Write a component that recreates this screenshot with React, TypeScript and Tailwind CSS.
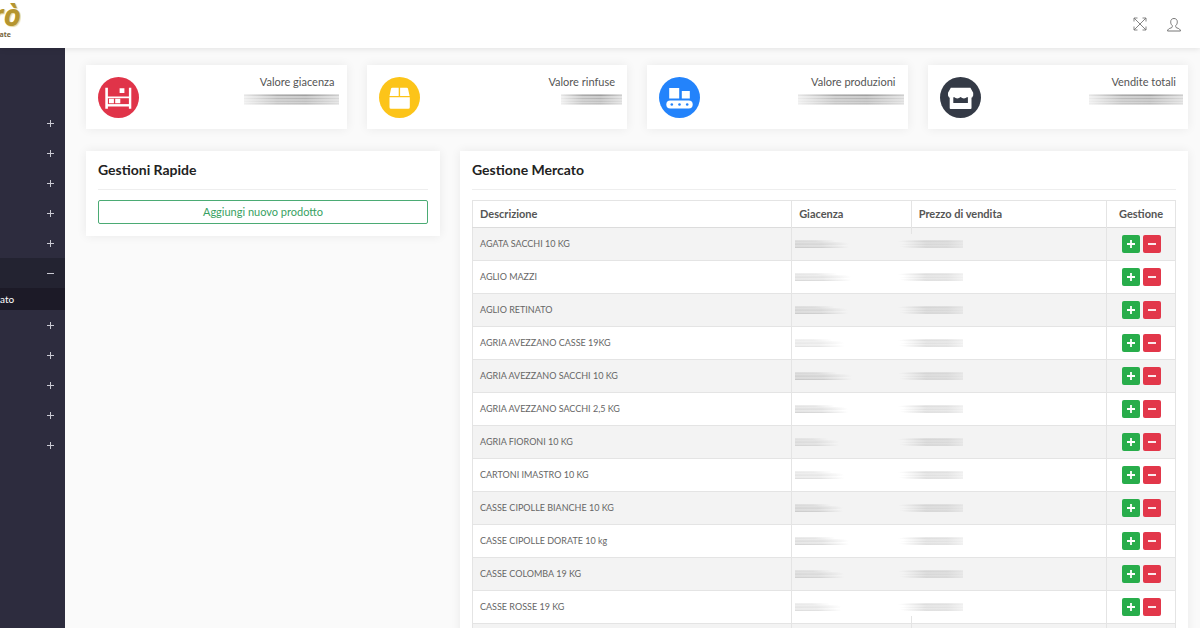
import type { ReactNode } from "react";

const products = [
  { name: "AGATA SACCHI 10 KG", stock: 54, tone: 0.9 },
  { name: "AGLIO MAZZI", stock: 56, tone: 0.8 },
  { name: "AGLIO RETINATO", stock: 53, tone: 0.9 },
  { name: "AGRIA AVEZZANO CASSE 19KG", stock: 49, tone: 0.6 },
  { name: "AGRIA AVEZZANO SACCHI 10 KG", stock: 57, tone: 1.1 },
  { name: "AGRIA AVEZZANO SACCHI 2,5 KG", stock: 53, tone: 0.9 },
  { name: "AGRIA FIORONI 10 KG", stock: 44, tone: 0.7 },
  { name: "CARTONI IMASTRO 10 KG", stock: 49, tone: 0.7 },
  { name: "CASSE CIPOLLE BIANCHE 10 KG", stock: 48, tone: 0.9 },
  { name: "CASSE CIPOLLE DORATE 10 kg", stock: 54, tone: 0.9 },
  { name: "CASSE COLOMBA 19 KG", stock: 49, tone: 0.8 },
  { name: "CASSE ROSSE 19 KG", stock: 46, tone: 0.7 },
];

function Gradients() {
  return (
    <svg width="0" height="0" className="absolute" aria-hidden="true">
      <defs>
        <linearGradient id="fade-end">
          <stop offset="0" stopColor="#808080" stopOpacity="0.8" />
          <stop offset="0.5" stopColor="#808080" stopOpacity="0.7" />
          <stop offset="1" stopColor="#808080" stopOpacity="0" />
        </linearGradient>
        <linearGradient id="fade-start">
          <stop offset="0" stopColor="#808080" stopOpacity="0" />
          <stop offset="0.4" stopColor="#808080" stopOpacity="0.75" />
          <stop offset="0.75" stopColor="#808080" stopOpacity="0.7" />
          <stop offset="1" stopColor="#808080" stopOpacity="0.35" />
        </linearGradient>
        <linearGradient id="fade-both">
          <stop offset="0" stopColor="#606060" stopOpacity="0.2" />
          <stop offset="0.35" stopColor="#606060" stopOpacity="0.7" />
          <stop offset="0.65" stopColor="#606060" stopOpacity="0.8" />
          <stop offset="1" stopColor="#606060" stopOpacity="0.4" />
        </linearGradient>
      </defs>
    </svg>
  );
}

function StockBlur({ length, tone }: { length: number; tone: number }) {
  return (
    <svg width={length} height="8" className="block" aria-hidden="true" opacity={tone}>
      <rect width={length * 0.75} height="1" fill="url(#fade-end)" opacity="0.22" />
      <rect y="1" width={length * 0.75} height="1" fill="url(#fade-end)" opacity="0.3" />
      <rect y="2" width={length * 0.95} height="1" fill="url(#fade-end)" opacity="0.24" />
      <rect y="3" width={length} height="1" fill="url(#fade-end)" opacity="0.32" />
      <rect y="4" width={length} height="1" fill="url(#fade-end)" opacity="0.36" />
      <rect y="5" width={length * 0.9} height="1" fill="url(#fade-end)" opacity="0.25" />
      <rect y="6" width={length} height="1" fill="url(#fade-end)" opacity="0.28" />
      <rect y="7" width={length} height="1" fill="url(#fade-end)" opacity="0.46" />
    </svg>
  );
}

function PriceBlur() {
  return (
    <svg width="65" height="8" className="block" aria-hidden="true">
      <rect x="3" width="62" height="1" fill="url(#fade-start)" opacity="0.24" />
      <rect x="0" y="1" width="65" height="1" fill="url(#fade-start)" opacity="0.34" />
      <rect x="5" y="2" width="60" height="2" fill="url(#fade-start)" opacity="0.26" />
      <rect x="2" y="4" width="63" height="1" fill="url(#fade-start)" opacity="0.32" />
      <rect x="6" y="5" width="59" height="1" fill="url(#fade-start)" opacity="0.24" />
      <rect x="1" y="6" width="64" height="1" fill="url(#fade-start)" opacity="0.3" />
      <rect x="4" y="7" width="61" height="1" fill="url(#fade-start)" opacity="0.32" />
    </svg>
  );
}

function TotalBlur({ width }: { width: number }) {
  const stripes = [0.45, 0.75, 0.4, 0.4, 0.6, 0.4, 0.4, 0.5, 0.35, 0.5, 0.3];
  return (
    <svg width={width} height="11" className="block" aria-hidden="true">
      {stripes.map((opacity, i) => (
        <rect key={i} y={i} width={width} height="1" fill="url(#fade-both)" opacity={opacity} />
      ))}
    </svg>
  );
}

function StatCard({
  label,
  color,
  blur,
  inset,
  icon,
}: {
  label: string;
  color: string;
  blur: number;
  inset: string;
  icon: ReactNode;
}) {
  return (
    <section className="flex h-16 items-center justify-between bg-white pl-3 shadow-[0_0_10px_rgba(0,0,0,0.07)]">
      <svg width="41" height="41" viewBox="0 0 41 41" aria-hidden="true">
        <circle cx="20.5" cy="20.5" r="20.5" fill={color} />
        {icon}
      </svg>
      <div className="flex h-full flex-col items-end pt-2">
        <h2 className="pr-3 text-[11px] leading-[18px] text-[#555]">{label}</h2>
        <div className={inset}>
          <TotalBlur width={blur} />
        </div>
      </div>
    </section>
  );
}

function ShelfIcon() {
  return (
    <g fill="#fff">
      <path d="M7.3 10.7h2.6v8.7h21v-8.7h2.4v21h-2.4v-2.3h-21v2.3H7.3z" />
      <path d="M9.9 21.2h21v5.900h-21z" fill="#e03449" />
      <path d="M11 21.700h4.900v4.500H11zM17.200 21.700h5.100v4.500h-5.100zM21.600 11.300h4.800v4.800h-4.800z" />
    </g>
  );
}

function BoxIcon() {
  return (
    <g fill="#fff">
      <path d="M13.2 10.7h6.500v8.200h-9.200l1.500-7.200q.2-1 1.200-1zM21.100 10.700h6.700q1 0 1.200 1l1.600 7.200h-9.500zM10.500 20.300h20.300v9.900q0 1.500-1.500 1.500H12q-1.500 0-1.500-1.500z" />
    </g>
  );
}

function ConveyorIcon() {
  return (
    <g fill="#fff">
      <path d="M10.2 11h10v10.500h-10zM22.800 14h8v7.500h-8z" />
      <rect x="7.3" y="23.500" width="26.400" height="8" rx="4" />
      <g fill="#2383fb">
        <circle cx="12.800" cy="27.500" r="1.300" />
        <circle cx="20.500" cy="27.500" r="1.300" />
        <circle cx="28.200" cy="27.500" r="1.300" />
      </g>
    </g>
  );
}

function ShopIcon() {
  return (
    <g fill="#fff">
      <path d="M10.8 10.700h19.600l2.800 5v2.800q-.4 2.500-3.300 2.700-1.500 0-2.700-1.200-1.500 1.400-3.300 1.400T20.600 20q-1.500 1.400-3.300 1.400T14 20q-1.200 1.200-2.700 1.200-2.900-.2-3.300-2.700v-2.800z" />
      <path d="M9.700 20.600h3.600v5.500h14.600v-5.500h3.600V31q0 .9-.9.9h-20q-.9 0-.9-.9z" />
    </g>
  );
}

function MenuItem({ open = false }: { open?: boolean }) {
  return (
    <button
      type="button"
      aria-label={open ? "Chiudi menu" : "Apri menu"}
      className={
        open
          ? "flex h-[30px] w-full items-center justify-end bg-[#232331] pr-[11px]"
          : "flex h-[30px] w-full items-center justify-end pr-[11px]"
      }
    >
      <svg width="7" height="7" viewBox="0 0 7 7" stroke="#c9c9d2" strokeWidth="1" aria-hidden="true">
        <path d={open ? "M0 3.5h7" : "M0 3.5h7M3.5 0v7"} />
      </svg>
    </button>
  );
}

function SymbolButton({ kind }: { kind: "add" | "remove" }) {
  const add = kind === "add";
  return (
    <button
      type="button"
      aria-label={add ? "Aggiungi" : "Rimuovi"}
      className={
        add
          ? "flex size-[18px] items-center justify-center rounded-xs bg-[#28ad4b]"
          : "flex size-[18px] items-center justify-center rounded-xs bg-[#e2374a]"
      }
    >
      <svg width="8" height="8" viewBox="0 0 8 8" stroke="#fff" strokeWidth="1.8" aria-hidden="true">
        <path d={add ? "M0 4h8M4 0v8" : "M0 4h8"} />
      </svg>
    </button>
  );
}

export default function App() {
  return (
    <div className="flex h-screen flex-col overflow-hidden bg-[#fafafa] font-[Lato,sans-serif] text-[#555]">
      <Gradients />
      <header className="z-10 flex h-12 shrink-0 items-center justify-between bg-white pr-[19px] shadow-[0_1px_6px_rgba(0,0,0,0.1)]">
        <a href="#" className="flex h-full w-[21px] flex-col items-end overflow-hidden">
          <span className="font-['Open_Sans',sans-serif] text-[30px] leading-[30px] font-bold text-[#b5952f] italic [text-shadow:1px_1px_1px_#e6d9a2]">
            rò
          </span>
          <span className="pr-[10px] font-['Open_Sans',sans-serif] text-[7px] leading-[10px] font-bold text-[#76643a]">
            ate
          </span>
        </a>
        <nav className="flex items-center gap-5">
          <button type="button" aria-label="Schermo intero">
            <svg width="14" height="14" viewBox="0 0 14 14" fill="none" stroke="#777" strokeWidth="0.9">
              <path d="M1 1l12 12M13 1L1 13M1 4.500V1h3.500M9.500 1H13v3.500M13 9.500V13H9.500M4.500 13H1V9.500" />
            </svg>
          </button>
          <button type="button" aria-label="Profilo">
            <svg width="14" height="16" viewBox="0 0 14 16" fill="none" stroke="#777" strokeWidth="1">
              <path d="M5.3 9.600C4 8.500 3.700 7.200 3.700 5.800 3.700 3.700 5 2.500 7 2.500s3.300 1.200 3.300 3.300c0 1.400-.3 2.700-1.600 3.800v1c0 .8.5 1.100 1.200 1.300 2 .6 3.400 1.300 3.600 3.100H.5c.2-1.800 1.600-2.500 3.600-3.100.7-.2 1.200-.5 1.200-1.300z" />
            </svg>
          </button>
        </nav>
      </header>

      <div className="flex min-h-0 flex-1">
        <aside className="w-[65px] shrink-0 bg-[#2d2c3e] pt-[60px]">
          <MenuItem />
          <MenuItem />
          <MenuItem />
          <MenuItem />
          <MenuItem />
          <MenuItem open />
          <a href="#" className="flex h-[22px] items-center bg-[#1c1a27] text-[10px] text-white">
            ato
          </a>
          <MenuItem />
          <MenuItem />
          <MenuItem />
          <MenuItem />
          <MenuItem />
        </aside>

        <main className="min-w-0 flex-1 pt-[17px] pr-3 pl-[21px]">
          <div className="grid grid-cols-4 gap-5">
            <StatCard label="Valore giacenza" color="#e03449" blur={95} inset="mt-[3px] pr-2" icon={<ShelfIcon />} />
            <StatCard label="Valore rinfuse" color="#fcc419" blur={61} inset="mt-[3px] pr-[5px]" icon={<BoxIcon />} />
            <StatCard label="Valore produzioni" color="#2383fb" blur={106} inset="mt-[3px] pr-1" icon={<ConveyorIcon />} />
            <StatCard label="Vendite totali" color="#343a46" blur={94} inset="mt-[3px] pr-[5px]" icon={<ShopIcon />} />
          </div>

          <div className="mt-[22px] grid grid-cols-3 items-start gap-5">
            <section className="bg-white px-3 pb-3 shadow-[0_0_10px_rgba(0,0,0,0.07)]">
              <h2 className="border-b border-[#eee] text-[14px] leading-[38px] font-bold text-[#222]">Gestioni Rapide</h2>
              <button
                type="button"
                className="mt-[10px] block h-6 w-full rounded-xs border border-[#4bab74] text-[11px] leading-[22px] text-[#37a162]"
              >
                Aggiungi nuovo prodotto
              </button>
            </section>

            <section className="col-span-2 bg-white px-3 pb-3 shadow-[0_0_10px_rgba(0,0,0,0.07)]">
              <h2 className="border-b border-[#eee] text-[14px] leading-[38px] font-bold text-[#222]">Gestione Mercato</h2>
              <table className="mt-[10px] w-full table-fixed border-collapse border border-[#e4e4e4] text-left text-[9px]">
                <colgroup>
                  <col className="w-[45.4%]" />
                  <col className="w-[17%]" />
                  <col className="w-[27.8%]" />
                  <col className="w-[9.8%]" />
                </colgroup>
                <thead>
                  <tr className="h-[27px] border-b border-[#dcdcdc] text-[11px] leading-4 text-[#555]">
                    <th className="border-r border-[#e4e4e4] px-[7px]">Descrizione</th>
                    <th className="border-r border-[#e4e4e4] px-[7px]">Giacenza</th>
                    <th className="border-r border-[#e4e4e4] px-[7px]">Prezzo di vendita</th>
                    <th className="text-center">Gestione</th>
                  </tr>
                </thead>
                <tbody>
                  {products.map((product, i) => (
                    <tr key={product.name} className="h-[33px] border-b border-[#e4e4e4] odd:bg-[#f3f3f3]">
                      <td className="border-r border-[#e4e4e4] px-[7px] text-[#666]">{product.name}</td>
                      <td className="pl-[3px]">
                        <StockBlur length={product.stock} tone={product.tone} />
                      </td>
                      <td className="relative border-r border-[#e4e4e4]">
                        {i === 0 && <span className="absolute top-0 left-0 h-[6px] w-px bg-[#e4e4e4]" />}
                        {i === products.length - 1 && (
                          <span className="absolute bottom-0 left-0 h-[7px] w-px bg-[#e4e4e4]" />
                        )}
                        <div className="-ml-[13px]">
                          <PriceBlur />
                        </div>
                      </td>
                      <td>
                        <div className="flex justify-center gap-[3px]">
                          <SymbolButton kind="add" />
                          <SymbolButton kind="remove" />
                        </div>
                      </td>
                    </tr>
                  ))}
                  <tr className="h-[33px] bg-[#f3f3f3]">
                    <td className="border-r border-[#e4e4e4]" />
                    <td className="border-r border-[#e4e4e4]" />
                    <td className="border-r border-[#e4e4e4]" />
                    <td />
                  </tr>
                </tbody>
              </table>
            </section>
          </div>
        </main>
      </div>
    </div>
  );
}
